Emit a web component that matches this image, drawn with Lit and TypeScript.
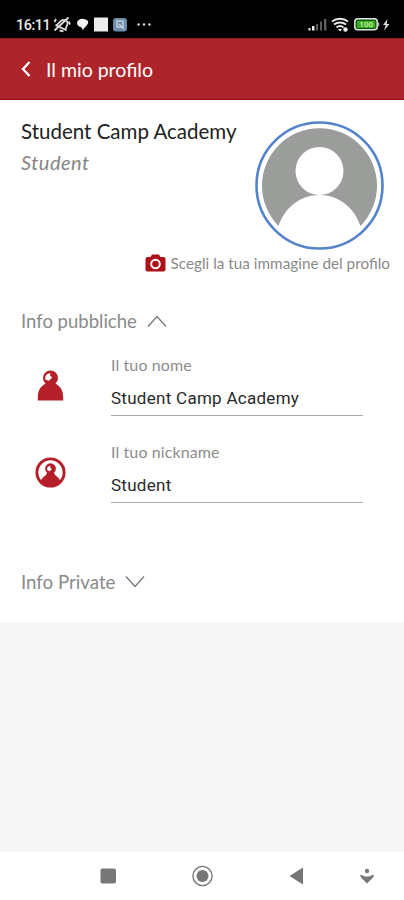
import { LitElement, html, css, svg } from "lit";
import { customElement, property } from "lit/decorators.js";

@customElement("status-bar")
class StatusBar extends LitElement {
  static styles = css`
    :host { display: flex; height: 38px; box-sizing: border-box; padding: 10px 14px 0 16px; background: #000; color: #e8e8e8; justify-content: space-between; }
    .time { font: 500 14.5px/31px Roboto, sans-serif; letter-spacing: -0.5px; width: 37px; white-space: nowrap; }
    .left { display: flex; }
    svg { display: block; }
    .level { font: 700 8px Roboto, sans-serif; }
  `;
  render() {
    return html`
      <div class="left">
        <span class="time">16:11</span>
        <svg width="102" height="28" viewBox="53 10 102 28">
          <g fill="none" stroke="#ddd" stroke-width="1.8">
            <path d="M56.500 27.500c2.500-1 2-4 3.500-6.300 2-2.700 5-2.700 6.500-.7 1.500 2.200 0 4.500 1 7.500z" transform="rotate(22 62 24)" />
            <path d="M54.500 30.500L68.500 17.500M56 19l-1.500 3M68.500 21.500l1.500 3M59.500 30.500l4 .8" />
          </g>
          <path d="M79.500 19.500q3-1.300 6 0 3 1 2.700 3.300-.7 2.500-3 4.200l-2.500 3-1-2.500q-4.500-1.500-4.700-4.500 0-2.500 2.500-3.500z" fill="#f5f5f5" />
          <rect x="94" y="17.500" width="14" height="14" fill="#ececec" />
          <rect x="113" y="18" width="14" height="13.500" rx="3" fill="#6f8ba8" />
          <path d="M117 21h6v6h-6zM119 24l5 5" fill="none" stroke="#c1d0df" stroke-width="1.5" />
          <g fill="#ddd"><circle cx="138.500" cy="24.500" r="1.200" /><circle cx="144" cy="24.500" r="1.200" /><circle cx="149.500" cy="24.500" r="1.200" /></g>
        </svg>
      </div>
      <svg width="84" height="28" viewBox="306 10 84 28">
        <path d="M308.500 30.500v-2.500h2v2.500zM312 30.500v-4.500h2.500v4.500z" fill="#eee" />
        <path d="M316 30.500v-6.500h2v6.500zM320 30.500v-9h2v9zM324 30.500V19h2.500v11.500z" fill="#5c5c5c" />
        <g fill="none" stroke="#e5e5e5" stroke-width="1.900">
          <path d="M332 21.500c4.500-3.700 11.500-3.700 16 0M334 24.600c3.500-2.900 8.500-2.900 12 0M336.500 27.500c2-1.700 5-1.700 7 0" />
        </g>
        <path d="M338 29.300c1-.8 3-.8 4 0L340 31.500z" fill="#eee" /><circle cx="345.500" cy="29.500" r="2.200" fill="#eee" />
        <rect x="354.800" y="18.800" width="22.400" height="11" rx="3" fill="#050" stroke="#e5e5e5" stroke-width="1.500" />
        <rect x="356.700" y="20.700" width="18.600" height="7.200" rx="1" fill="#3ea526" />
        <path d="M378.300 21.800q2.200 2.500 0 5z" fill="#e5e5e5" />
        <text class="level" x="359.300" y="27.200" fill="#b9ee92">100</text>
        <path d="M387.500 19l-4.500 6h2.700L384 30.500l5.500-6.500h-2.800z" fill="#ddd" />
      </svg>
    `;
  }
}

@customElement("info-field")
class InfoField extends LitElement {
  @property() label = "";
  @property() value = "";
  @property() icon = "person";
  static styles = css`
    :host { display: flex; height: 87px; padding-right: 41px; }
    .icon { width: 75px; padding-left: 14px; box-sizing: border-box; padding-top: 25px; flex: none; margin-right: 15px; }
    .body { flex: 1; }
    .label { font: 400 16px/20px Lato, sans-serif; letter-spacing: 0.1px; color: #8d8d8d; padding-top: 10px; height: 24px; }
    .value { font: 400 17px/24px Roboto, sans-serif; color: #2a2a2a; letter-spacing: 0.28px; height: 37px; padding-top: 2px; box-sizing: border-box; border-bottom: 1.5px solid #aaa; display: flex; align-items: center; white-space: nowrap; }
    svg { display: block; }
  `;
  render() {
    const glyph =
      this.icon === "person"
        ? svg`<path d="M10.500 13.600A7.500 7.500 0 1 1 20.500 13.600C25.500 16.500 28 20.500 28.200 27V30.500H2.800V27C3 20.500 5.500 16.500 10.500 13.600z" fill="#b51f29"/>
            <path d="M10.300 9.500Q9.500 3.500 15.500 3.200L15 5.800 17.300 7.300 14 10.700z" fill="#fff"/>`
        : svg`<circle cx="15.500" cy="15.500" r="13.600" fill="#fff" stroke="#b51f29" stroke-width="2.900"/>
            <path d="M12 15.800A5.400 5.400 0 1 1 19 15.800Q19.500 18.500 22.500 20 24.500 21.500 25.500 24.500 21 29 15.500 29T5.500 24.500Q6.500 21.500 8.500 20 11.500 18.500 12 15.800z" fill="#b51f29"/>
            <path d="M12.200 13Q11.500 9 15.700 8.700L15 10.700 17 12 14.500 14.200z" fill="#fff"/>`;
    return html`
      <div class="icon"><svg width="31" height="31" viewBox="0 0 31 31">${glyph}</svg></div>
      <div class="body"><div class="label">${this.label}</div><div class="value">${this.value}</div></div>
    `;
  }
}

@customElement("app-root")
class AppRoot extends LitElement {
  static styles = css`
    :host { display: flex; flex-direction: column; height: 900px; background: #f7f7f7; font-family: Lato, sans-serif; overflow: hidden; }
    svg { display: block; flex: none; }
    .header { height: 62px; box-sizing: border-box; background: #ae242b; border-top: 1px solid #8f2025; border-bottom: 1px solid #960f15; color: #fff; display: flex; align-items: center; padding-left: 20px; font-size: 19.5px; gap: 14px; }
    .page { background: #fff; height: 522px; box-sizing: border-box; padding-left: 21px; }
    .profile { display: flex; justify-content: space-between; padding: 21px 20px 0 0; height: 150px; box-sizing: border-box; }
    .name { font-size: 20.5px; line-height: 21px; color: #222; white-space: nowrap; }
    .role { font-size: 20px; line-height: 24px; letter-spacing: 0.5px; font-style: italic; color: #858585; padding-top: 8px; }
    .choose { display: flex; align-items: center; justify-content: flex-end; height: 26px; gap: 5px; padding-right: 14px; font-size: 15.3px; color: #8a8a8a; white-space: nowrap; }
    .section { display: flex; align-items: center; gap: 10px; color: #8a8a8a; height: 30px; }
    .public { padding: 30px 0 9px; font-size: 18.5px; }
    .private { padding-top: 48px; font-size: 18.7px; }
    .nav { background: #fff; height: 48px; margin-top: auto; }
  `;
  render() {
    return html`
      <status-bar></status-bar>
      <div class="header">
        <svg width="12" height="18" viewBox="0 0 12 18"><path d="M9.500 2L3 9l6.500 7" fill="none" stroke="#fff" stroke-width="2.300" /></svg>
        <span>Il mio profilo</span>
      </div>
      <div class="page">
        <div class="profile">
          <div><div class="name">Student Camp Academy</div><div class="role">Student</div></div>
          <svg width="129" height="129" viewBox="0 0 129 129">
            <circle cx="64.500" cy="64.500" r="63" fill="#fff" stroke="#5482cb" stroke-width="2.600" />
            <path d="M23.500 105A57.500 57.500 0 1 1 105.500 105C99.500 87 84 74 64.500 74S29.500 87 23.500 105z" fill="#9b9d9b" />
            <circle cx="64.500" cy="50" r="24" fill="#fff" />
          </svg>
        </div>
        <div class="choose">
          <svg width="21" height="18" viewBox="0 0 21 18">
            <path d="M2.500 3H5.500L7 .5h7L15.500 3h3q2 0 2 2v10.500q0 2-2 2h-16q-2 0-2-2V5q0-2 2-2z" fill="#ae1117" />
            <circle cx="10.500" cy="10" r="4.300" fill="none" stroke="#fff" stroke-width="2" />
          </svg>
          <span>Scegli la tua immagine del profilo</span>
        </div>
        <div class="section public"><span>Info pubbliche</span>
          <svg width="20" height="14" viewBox="0 0 20 14"><path d="M1 12.500l9-10 9 10" fill="none" stroke="#777" stroke-width="1.300" /></svg>
        </div>
        <info-field label="Il tuo nome" value="Student Camp Academy" icon="person"></info-field>
        <info-field label="Il tuo nickname" value="Student" icon="badge"></info-field>
        <div class="section private"><span>Info Private</span>
          <svg width="20" height="14" viewBox="0 0 20 14"><path d="M1 1.500l9 10 9-10" fill="none" stroke="#777" stroke-width="1.300" /></svg>
        </div>
      </div>
      <div class="nav">
        <svg width="404" height="48" viewBox="0 852 404 48" fill="#777">
          <rect x="100.500" y="868.500" width="15.500" height="15" rx="2" />
          <circle cx="202.500" cy="876" r="9.600" fill="none" stroke="#777" stroke-width="1.400" /><circle cx="202.500" cy="876" r="6" />
          <path d="M289.500 876L303 867.500v17z" />
          <circle cx="367" cy="871" r="2.200" /><path d="M360.500 874.500l4.500 2h4l4.500-2v2.500l-6.500 6.500-6.500-6.500z" />
        </svg>
      </div>
    `;
  }
}
